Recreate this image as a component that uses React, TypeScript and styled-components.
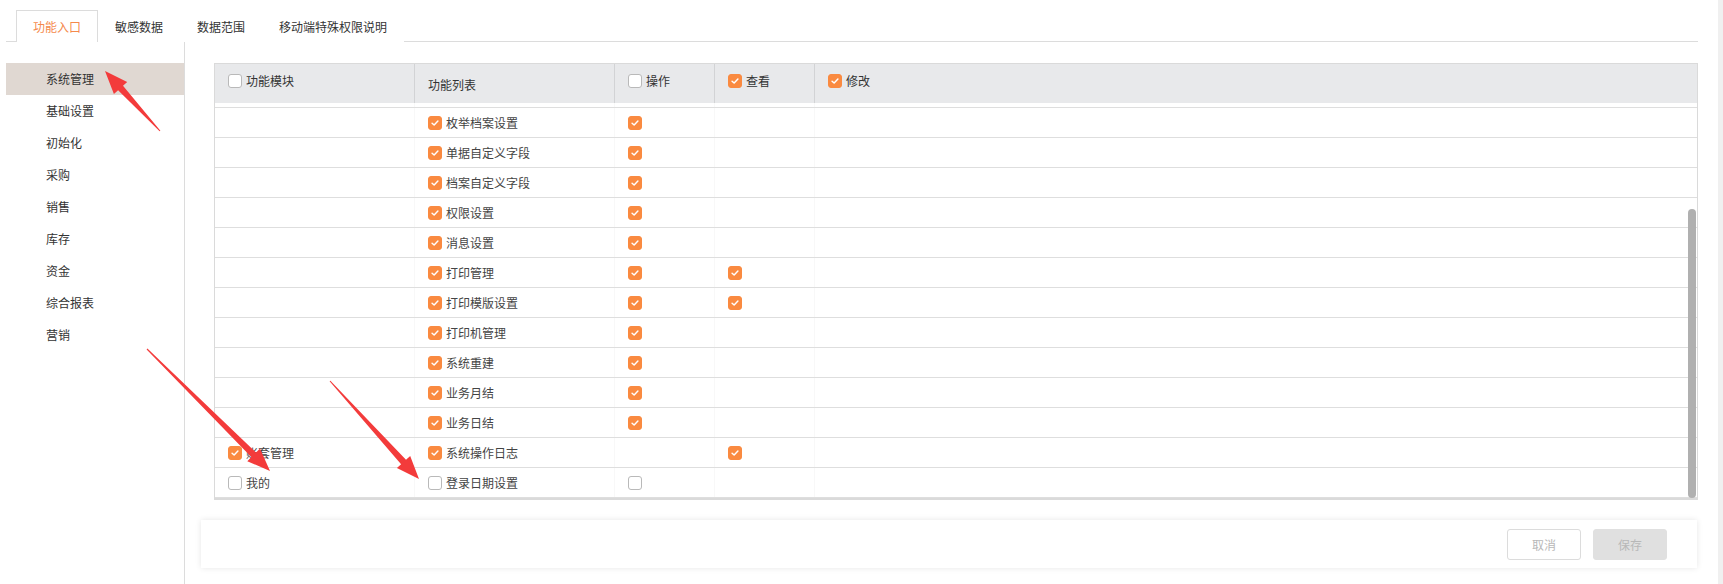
import React, { useLayoutEffect, useRef, useState } from "react";
import styled, { createGlobalStyle } from "styled-components";

const GlobalStyle = createGlobalStyle`
  html, body {
    margin: 0;
    padding: 0;
    background: #fff;
    font-family: "Noto Sans CJK SC", "Noto Sans", sans-serif;
    font-size: 12px;
    color: #333;
  }
`;

type Row = {
  module?: string;
  moduleChecked?: boolean;
  name: string;
  checked: boolean;
  op?: boolean;
  view?: boolean;
};

const rows: Row[] = [
  { module: "系统管理", moduleChecked: true, name: "用户管理", checked: true, op: true, view: true },
  { name: "角色管理", checked: true, op: true },
  { name: "系统参数", checked: true, op: true },
  { name: "门店管理", checked: true, op: true },
  { name: "数据备份", checked: true, op: true },
  { name: "枚举档案设置", checked: true, op: true },
  { name: "单据自定义字段", checked: true, op: true },
  { name: "档案自定义字段", checked: true, op: true },
  { name: "权限设置", checked: true, op: true },
  { name: "消息设置", checked: true, op: true },
  { name: "打印管理", checked: true, op: true, view: true },
  { name: "打印模版设置", checked: true, op: true, view: true },
  { name: "打印机管理", checked: true, op: true },
  { name: "系统重建", checked: true, op: true },
  { name: "业务月结", checked: true, op: true },
  { name: "业务日结", checked: true, op: true },
  { module: "账套管理", moduleChecked: true, name: "系统操作日志", checked: true, view: true },
  { module: "我的", moduleChecked: false, name: "登录日期设置", checked: false, op: false },
];

const menu = ["系统管理", "基础设置", "初始化", "采购", "销售", "库存", "资金", "综合报表", "营销"];
const tabs = ["功能入口", "敏感数据", "数据范围", "移动端特殊权限说明"];

// annotation arrows, tail -> tip
const arrows = [
  { x1: 160, y1: 131, x2: 105, y2: 71 },
  { x1: 147, y1: 349, x2: 270, y2: 471 },
  { x1: 330, y1: 381, x2: 419, y2: 479 },
];

function arrowPoints(a: { x1: number; y1: number; x2: number; y2: number }) {
  const dx = a.x2 - a.x1;
  const dy = a.y2 - a.y1;
  const len = Math.hypot(dx, dy);
  const ux = dx / len;
  const uy = dy / len;
  const nx = -uy;
  const ny = ux;
  const head = 23;
  const hw = 9;
  const sw = 3.3;
  const bx = a.x2 - ux * head;
  const by = a.y2 - uy * head;
  const p = (x: number, y: number) => `${x.toFixed(1)},${y.toFixed(1)}`;
  return [
    p(a.x1 + nx * 0.5, a.y1 + ny * 0.5),
    p(bx + nx * sw, by + ny * sw),
    p(bx + nx * hw, by + ny * hw),
    p(a.x2, a.y2),
    p(bx - nx * hw, by - ny * hw),
    p(bx - nx * sw, by - ny * sw),
    p(a.x1 - nx * 0.5, a.y1 - ny * 0.5),
  ].join(" ");
}

const Check = ({ on }: { on: boolean }) => (
  <Box $on={on}>
    {on && (
      <svg width="14" height="14" viewBox="0 0 14 14">
        <path d="M3.6 7.2 L6 9.4 L10.4 4.8" fill="none" stroke="#fff" strokeWidth="1.7" strokeLinecap="round" strokeLinejoin="round" />
      </svg>
    )}
  </Box>
);

export default function App() {
  const scrollRef = useRef<HTMLDivElement>(null);
  const [thumb, setThumb] = useState({ top: 0, height: 0 });

  useLayoutEffect(() => {
    const el = scrollRef.current;
    if (!el) return;
    el.scrollTop = el.scrollHeight;
    const view = el.clientHeight;
    const full = el.scrollHeight;
    const height = Math.round((view * view) / full);
    const top = Math.round((el.scrollTop / full) * view);
    setThumb({ top, height });
  }, []);

  return (
    <Page>
      <GlobalStyle />
      <Content>
        <TabBar>
          {tabs.map((t, i) => (
            <Tab key={t} $active={i === 0}>{t}</Tab>
          ))}
        </TabBar>
        <Body>
          <Sidebar>
            {menu.map((m, i) => (
              <MenuItem key={m} $active={i === 0}>{m}</MenuItem>
            ))}
          </Sidebar>
          <Main>
            <Table>
              <HeadRow>
                <HeadCell><HeadLabel><Check on={false} />功能模块</HeadLabel></HeadCell>
                <HeadCell $plain><HeadLabel>功能列表</HeadLabel></HeadCell>
                <HeadCell><HeadLabel><Check on={false} />操作</HeadLabel></HeadCell>
                <HeadCell><HeadLabel><Check on />查看</HeadLabel></HeadCell>
                <HeadCell $last><HeadLabel><Check on />修改</HeadLabel></HeadCell>
              </HeadRow>
              <ScrollWrap>
                <ScrollBody ref={scrollRef}>
                  {rows.map((r, i) => (
                    <BodyRow key={i}>
                      <Cell>{r.module && <><Check on={!!r.moduleChecked} />{r.module}</>}</Cell>
                      <Cell><Check on={r.checked} />{r.name}</Cell>
                      <Cell>{r.op !== undefined && <Check on={r.op} />}</Cell>
                      <Cell>{r.view && <Check on />}</Cell>
                      <Cell $last />
                    </BodyRow>
                  ))}
                </ScrollBody>
                {thumb.height > 0 && <Thumb style={{ top: thumb.top, height: thumb.height }} />}
              </ScrollWrap>
            </Table>
            <Footer>
              <Button>取消</Button>
              <Button $primary>保存</Button>
            </Footer>
          </Main>
        </Body>
      </Content>
      <PageTrack />
      <Overlay width="1723" height="584" viewBox="0 0 1723 584">
        {arrows.map((a, i) => (
          <polygon key={i} points={arrowPoints(a)} fill="#f33b3b" />
        ))}
      </Overlay>
    </Page>
  );
}

const Page = styled.div`
  position: relative;
  display: flex;
  width: 1723px;
  height: 584px;
  overflow: hidden;
`;

const Content = styled.div`
  flex: 1;
  display: flex;
  flex-direction: column;
  padding: 10px 20px 0 6px;
  min-width: 0;
`;

const PageTrack = styled.div`
  width: 5px;
  background: #f0f0f0;
`;

const TabBar = styled.div`
  display: flex;
  height: 31px;
  padding-left: 10px;
  border-bottom: 1px solid #dcdcdc;
`;

const Tab = styled.div<{ $active?: boolean }>`
  display: flex;
  align-items: center;
  padding: 0 16px;
  height: 32px;
  box-sizing: border-box;
  color: ${(p) => (p.$active ? "#f5894c" : "#333")};
  background: #fff;
  border: 1px solid ${(p) => (p.$active ? "#dcdcdc" : "transparent")};
  border-bottom: none;
  margin-bottom: -1px;
`;

const Body = styled.div`
  flex: 1;
  display: flex;
  min-height: 0;
`;

const Sidebar = styled.div`
  width: 178px;
  padding-top: 21px;
  border-right: 1px solid #dcdcdc;
`;

const MenuItem = styled.div<{ $active?: boolean }>`
  height: 32px;
  line-height: 32px;
  padding-left: 40px;
  color: #333;
  background: ${(p) => (p.$active ? "#e0d8d2" : "transparent")};
`;

const Main = styled.div`
  flex: 1;
  min-width: 0;
  padding: 21px 0 0 16px;
  display: flex;
  flex-direction: column;
`;

const Table = styled.div`
  margin-left: 13px;
  border: 1px solid #dadada;
  border-bottom-width: 2px;
`;

const cols = "200px 200px 100px 100px 1fr";

const HeadRow = styled.div`
  display: grid;
  grid-template-columns: ${cols};
  height: 39px;
  background: #e8e9eb;
`;

const HeadCell = styled.div<{ $last?: boolean; $plain?: boolean }>`
  box-sizing: border-box;
  padding: ${(p) => (p.$plain ? "12px" : "8px")} 0 0 13px;
  border-right: ${(p) => (p.$last ? "none" : "1px solid #d2d3d5")};
  color: #333;
`;

const HeadLabel = styled.div`
  display: flex;
  align-items: center;
  gap: 4px;
  height: 17px;
`;

const ScrollWrap = styled.div`
  position: relative;
`;

const ScrollBody = styled.div`
  height: 395px;
  overflow-y: auto;
  scrollbar-width: none;

  &::-webkit-scrollbar {
    display: none;
  }
`;

const Thumb = styled.div`
  position: absolute;
  right: 1px;
  width: 8px;
  border-radius: 4px;
  background: #b0b0b0;
`;

const BodyRow = styled.div`
  display: grid;
  grid-template-columns: ${cols};
  height: 30px;
  box-sizing: border-box;
  border-bottom: 1px solid #dedede;
`;

const Cell = styled.div<{ $last?: boolean }>`
  display: flex;
  align-items: center;
  gap: 4px;
  padding-left: 13px;
  color: #444;
  border-right: ${(p) => (p.$last ? "none" : "1px solid #f8f8f8")};
`;

const Box = styled.span<{ $on: boolean }>`
  display: inline-flex;
  align-items: center;
  justify-content: center;
  width: 14px;
  height: 14px;
  box-sizing: border-box;
  border-radius: 3px;
  background: ${(p) => (p.$on ? "#fa8a40" : "#fff")};
  border: 1px solid ${(p) => (p.$on ? "#fa8a40" : "#b9b9b9")};
  flex-shrink: 0;

  svg {
    display: block;
  }
`;

const Footer = styled.div`
  margin-top: 20px;
  margin-right: 1px;
  height: 48px;
  display: flex;
  align-items: center;
  justify-content: flex-end;
  gap: 12px;
  padding-right: 30px;
  background: #fff;
  box-shadow: 0 0 6px rgba(0, 0, 0, 0.1);
`;

const Button = styled.div<{ $primary?: boolean }>`
  width: 74px;
  height: 31px;
  box-sizing: border-box;
  display: flex;
  align-items: center;
  justify-content: center;
  border-radius: 3px;
  color: #b8b8b8;
  font-size: 12px;
  background: ${(p) => (p.$primary ? "#e0e0e0" : "#fff")};
  border: 1px solid ${(p) => (p.$primary ? "#e0e0e0" : "#dcdcdc")};
`;

const Overlay = styled.svg`
  position: absolute;
  left: 0;
  top: 0;
  pointer-events: none;
`;
